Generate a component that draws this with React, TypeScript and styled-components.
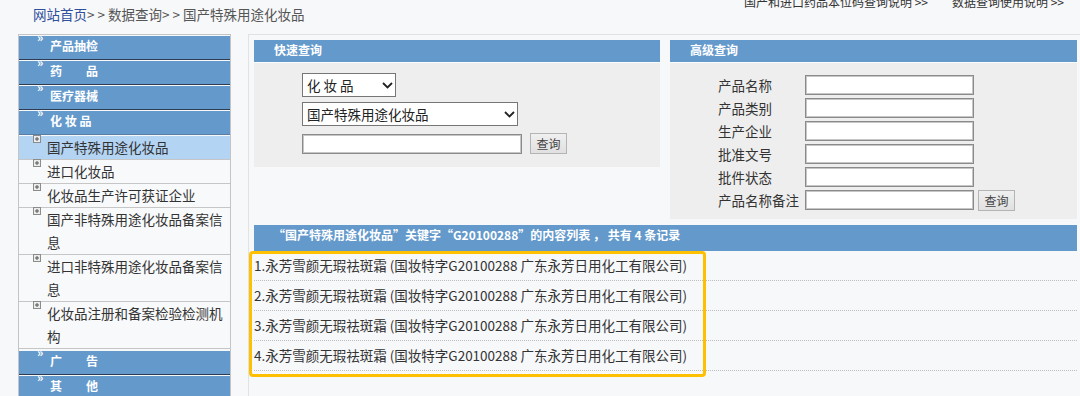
import styled, { createGlobalStyle } from 'styled-components'

const GlobalStyle = createGlobalStyle`
  html, body {
    margin: 0;
    padding: 0;
    background: #f7f8fa;
    overflow: hidden;
  }
  body {
    font-family: 'Noto Sans CJK SC', 'Noto Sans', sans-serif;
    color: #333;
    font-size: 13.5px;
  }
`

type MenuGroup = { title: string; items?: string[] }

const menus: MenuGroup[] = [
  { title: '产品抽检' },
  { title: '药　　品' },
  { title: '医疗器械' },
  {
    title: '化 妆 品',
    items: [
      '国产特殊用途化妆品',
      '进口化妆品',
      '化妆品生产许可获证企业',
      '国产非特殊用途化妆品备案信息',
      '进口非特殊用途化妆品备案信息',
      '化妆品注册和备案检验检测机构',
    ],
  },
  { title: '广　　告' },
  { title: '其　　他' },
]

const fields = ['产品名称', '产品类别', '生产企业', '批准文号', '批件状态', '产品名称备注']

const results = [1, 2, 3, 4].map(n => `${n}.永芳雪颜无瑕祛斑霜 (国妆特字G20100288 广东永芳日用化工有限公司)`)

const PlusIcon = () => (
  <StyledPlus width='8' height='8' viewBox='0 0 8 8'>
    <rect x='0.5' y='0.5' width='7' height='7' fill='#ececec' stroke='#8c8c8c' />
    <path d='M2 4h4M4 2v4' stroke='#555' strokeWidth='1' />
  </StyledPlus>
)

const ChevronDown = () => (
  <svg width='11' height='7' viewBox='0 0 11 7'>
    <path d='M1 1l4.5 4.5L10 1' fill='none' stroke='#222' strokeWidth='1.8' />
  </svg>
)

const App = () => {
  return (
    <StyledPage>
      <GlobalStyle />
      <StyledTopBar>
        <StyledBreadcrumb>
          <StyledCrumbLink>网站首页</StyledCrumbLink>&gt; &gt; 数据查询&gt; &gt; 国产特殊用途化妆品
        </StyledBreadcrumb>
        <StyledTopLinks>
          <span>国产和进口药品本位码查询说明 &gt;&gt;</span>
          <span>数据查询使用说明 &gt;&gt;</span>
        </StyledTopLinks>
      </StyledTopBar>

      <StyledLayout>
        <StyledSidebar>
          {menus.map(group => (
            <div key={group.title}>
              <StyledMenuHeader $open={!!group.items}>
                <StyledArrows>»</StyledArrows>
                <span>{group.title}</span>
              </StyledMenuHeader>
              {group.items && (
                <StyledSubList>
                  {group.items.map((item, i) => (
                    <StyledSubItem key={item} $active={i === 0}>
                      <PlusIcon />
                      <StyledSubText>{item}</StyledSubText>
                    </StyledSubItem>
                  ))}
                </StyledSubList>
              )}
            </div>
          ))}
        </StyledSidebar>

        <StyledMain>
          <StyledPanelRow>
            <StyledPanel $width={406}>
              <StyledPanelHeader>快速查询</StyledPanelHeader>
              <StyledQuickBody>
                <StyledSelectBox $width={94}>
                  <span>化 妆 品</span>
                  <ChevronDown />
                </StyledSelectBox>
                <StyledSelectBox $width={216}>
                  <span>国产特殊用途化妆品</span>
                  <ChevronDown />
                </StyledSelectBox>
                <StyledInputRow>
                  <StyledTextInput $width={220} />
                  <StyledQueryButton>查询</StyledQueryButton>
                </StyledInputRow>
              </StyledQuickBody>
            </StyledPanel>

            <StyledPanel $width={407}>
              <StyledPanelHeader>高级查询</StyledPanelHeader>
              <StyledAdvancedBody>
                <StyledFieldGrid>
                  {fields.map((label, i) => (
                    <StyledFieldRow key={label}>
                      <StyledFieldLabel>{label}</StyledFieldLabel>
                      <StyledTextInput $width={169} />
                      {i === fields.length - 1 && <StyledQueryButton>查询</StyledQueryButton>}
                    </StyledFieldRow>
                  ))}
                </StyledFieldGrid>
              </StyledAdvancedBody>
            </StyledPanel>
          </StyledPanelRow>

          <StyledResultHeader>
            “国产特殊用途化妆品”关键字“G20100288”的内容列表 ， 共有 4 条记录
          </StyledResultHeader>
          <StyledResultList>
            {results.map(text => (
              <StyledResultRow key={text}>{text}</StyledResultRow>
            ))}
            <StyledHighlight />
          </StyledResultList>
        </StyledMain>
      </StyledLayout>
    </StyledPage>
  )
}

export default App

const StyledPage = styled.div`
  width: 1080px;
  height: 396px;
  overflow: hidden;
`
const StyledTopBar = styled.div`
  display: flex;
  justify-content: space-between;
  align-items: flex-start;
  height: 34px;
`
const StyledBreadcrumb = styled.div`
  margin-top: 5px;
  padding-left: 33px;
  line-height: 18px;
  color: #555;
  white-space: pre;
`
const StyledCrumbLink = styled.span`
  color: #2f4f9c;
`
const StyledTopLinks = styled.div`
  display: flex;
  gap: 24px;
  margin-top: -6px;
  padding-right: 16px;
  font-size: 12px;
  line-height: 16px;
  color: #333;
  white-space: nowrap;
`
const StyledLayout = styled.div`
  display: flex;
  align-items: flex-start;
  gap: 17px;
  padding-left: 18px;
`
const StyledSidebar = styled.div`
  flex-shrink: 0;
  box-sizing: border-box;
  width: 213px;
  min-height: 400px;
  padding-top: 1px;
  border: 1px solid #c4c4c4;
  border-bottom: none;
`
const StyledMenuHeader = styled.div<{ $open: boolean }>`
  display: flex;
  height: 23px;
  padding-left: 18px;
  background: #6499cb;
  border-bottom: 1px solid ${({ $open }) => ($open ? '#5a7da6' : '#2e3c52')};
  margin-bottom: ${({ $open }) => ($open ? '0' : '1px')};
  color: #fff;
  font-size: 12px;
  font-weight: bold;
  line-height: 19px;
  white-space: pre;
`
const StyledArrows = styled.span`
  width: 13px;
  margin-top: -5px;
  font-size: 12px;
  line-height: 12px;
`
const StyledSubList = styled.div`
  padding-top: 1px;
  margin-bottom: 2px;
`
const StyledSubItem = styled.div<{ $active: boolean }>`
  display: flex;
  align-items: flex-start;
  gap: 6px;
  padding-left: 14px;
  background: ${({ $active }) => ($active ? '#b4d4f4' : '#f8f9fb')};
  border-bottom: 1px solid #c6c6c6;
  line-height: 23px;
  color: #333;
`
const StyledPlus = styled.svg`
  flex-shrink: 0;
  margin-top: -1px;
`
const StyledSubText = styled.div`
  flex: 1;
  min-width: 0;
`
const StyledMain = styled.div`
  flex-shrink: 0;
  box-sizing: border-box;
  width: 835px;
  min-height: 380px;
  padding: 5px;
  border: 1px solid #e0e2e6;
`
const StyledPanelRow = styled.div`
  display: flex;
  align-items: flex-start;
  gap: 10px;
`
const StyledPanel = styled.div<{ $width: number }>`
  width: ${({ $width }) => $width}px;
`
const StyledPanelHeader = styled.div`
  height: 22px;
  padding-left: 20px;
  background: #6499cb;
  border-bottom: 1px solid #fbfcfd;
  color: #fff;
  font-size: 12px;
  font-weight: bold;
  line-height: 20px;
`
const StyledQuickBody = styled.div`
  display: flex;
  flex-direction: column;
  align-items: flex-start;
  gap: 5px;
  padding: 10px 0 13px 48px;
  background: #eeeeee;
`
const StyledSelectBox = styled.div<{ $width: number }>`
  display: flex;
  align-items: center;
  justify-content: space-between;
  box-sizing: border-box;
  width: ${({ $width }) => $width}px;
  height: 24px;
  padding: 0 2px 0 4px;
  background: #fff;
  border: 1px solid #767676;
  color: #222;
  white-space: pre;
`
const StyledInputRow = styled.div`
  display: flex;
  align-items: center;
  gap: 8px;
  margin-top: 2px;
`
const StyledTextInput = styled.div<{ $width: number }>`
  box-sizing: border-box;
  width: ${({ $width }) => $width}px;
  height: 20px;
  background: #fff;
  border: 1px solid #8a8a8a;
  box-shadow: inset 0 0 0 1px #c6c6c6;
`
const StyledQueryButton = styled.div`
  box-sizing: border-box;
  width: 37px;
  height: 21px;
  background: linear-gradient(#f0f0f0, #e0e0e0);
  border: 1px solid #b4b4b4;
  color: #444;
  font-size: 12px;
  line-height: 19px;
  text-align: center;
`
const StyledAdvancedBody = styled.div`
  padding: 12px 0 9px 48px;
  background: #eeeeee;
`
const StyledFieldGrid = styled.div`
  display: flex;
  flex-direction: column;
  gap: 3px;
`
const StyledFieldRow = styled.div`
  display: flex;
  align-items: center;
  gap: 4px;
  height: 20px;
`
const StyledFieldLabel = styled.div`
  width: 83px;
  color: #333;
  line-height: 20px;
  white-space: nowrap;
`
const StyledResultHeader = styled.div`
  height: 26px;
  margin-top: 6px;
  padding-left: 19px;
  background: #6499cb;
  color: #fff;
  font-size: 12px;
  font-weight: bold;
  line-height: 20px;
  white-space: pre;
`
const StyledResultList = styled.div`
  position: relative;
`
const StyledResultRow = styled.div`
  height: 29px;
  border-bottom: 1px dotted #bdbdbd;
  color: #333;
  line-height: 29px;
  white-space: nowrap;
`
const StyledHighlight = styled.div`
  position: absolute;
  left: -5px;
  top: 0;
  box-sizing: border-box;
  width: 457px;
  height: 126px;
  border: 3px solid #ffc000;
  border-radius: 4px;
  pointer-events: none;
`
